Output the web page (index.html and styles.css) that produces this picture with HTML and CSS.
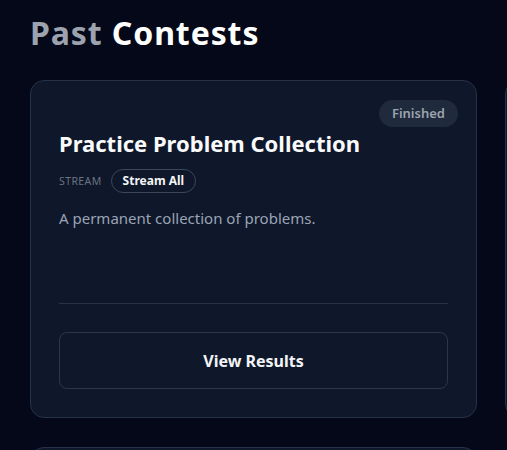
FILE: index.html
```html
<!DOCTYPE html>
<html lang="en">
<head>
<meta charset="utf-8">
<title>Past Contests</title>
<link rel="stylesheet" href="styles.css">
</head>
<body>
<main class="page">
  <h1 class="heading"><span class="heading-muted">Past</span> Contests</h1>
  <div class="grid">
    <article class="card">
      <span class="badge">Finished</span>
      <h2 class="card-title">Practice Problem Collection</h2>
      <div class="meta">
        <span class="meta-label">STREAM</span>
        <span class="pill">Stream All</span>
      </div>
      <p class="desc">A permanent collection of problems.</p>
      <div class="spacer"></div>
      <hr class="divider">
      <button class="btn">View Results</button>
    </article>
    <article class="card card-empty"></article>
    <article class="card card-empty"></article>
    <article class="card card-empty"></article>
  </div>
</main>
</body>
</html>
```
FILE: styles.css
```css
* { box-sizing: border-box; }
html, body {
  margin: 0;
  background: #050818;
  overflow: hidden;
}
body {
  font-family: "Noto Sans", "Open Sans", sans-serif;
  color: #f3f4f6;
}
.page {
  padding: 12px 0 0 30px;
}
.heading {
  margin: 0;
  font-size: 32px;
  font-weight: 700;
  line-height: 42px;
  color: #ffffff;
  letter-spacing: 0.9px;
}
.heading-muted { color: #9ca3af; }
.grid {
  margin-top: 26px;
  display: grid;
  grid-template-columns: 447px 447px;
  grid-auto-rows: 338px;
  gap: 29px 28px;
}
.card {
  position: relative;
  display: flex;
  flex-direction: column;
  background: #0f172a;
  border: 1px solid #263247;
  border-radius: 14px;
  padding: 47px 28px 28px 28px;
}
.badge {
  position: absolute;
  top: 19px;
  right: 18px;
  height: 27px;
  padding: 0 13px;
  border-radius: 999px;
  background: #1f2a3c;
  color: #9ca3af;
  font-size: 13px;
  font-weight: 600;
  line-height: 27px;
}
.card-title {
  margin: 0;
  font-size: 22px;
  font-weight: 700;
  line-height: 30px;
  color: #f9fafb;
}
.meta {
  margin-top: 11px;
  display: flex;
  align-items: center;
  gap: 9px;
}
.meta-label {
  font-size: 10.5px;
  letter-spacing: 0.4px;
  color: #6b7280;
}
.pill {
  height: 24px;
  padding: 0 11px;
  border: 1px solid #3b475c;
  border-radius: 999px;
  font-size: 12px;
  font-weight: 700;
  line-height: 22px;
  color: #f3f4f6;
}
.desc {
  margin: 15px 0 0 0;
  font-size: 15px;
  line-height: 20px;
  color: #9aa4b5;
}
.spacer { flex: 1; }
.divider {
  margin: 0;
  border: 0;
  border-top: 1px solid #263247;
}
.btn {
  margin-top: 28px;
  height: 57px;
  background: transparent;
  border: 1px solid #2a364b;
  border-radius: 8px;
  font-family: inherit;
  font-size: 16px;
  font-weight: 700;
  color: #f3f4f6;
}
```
